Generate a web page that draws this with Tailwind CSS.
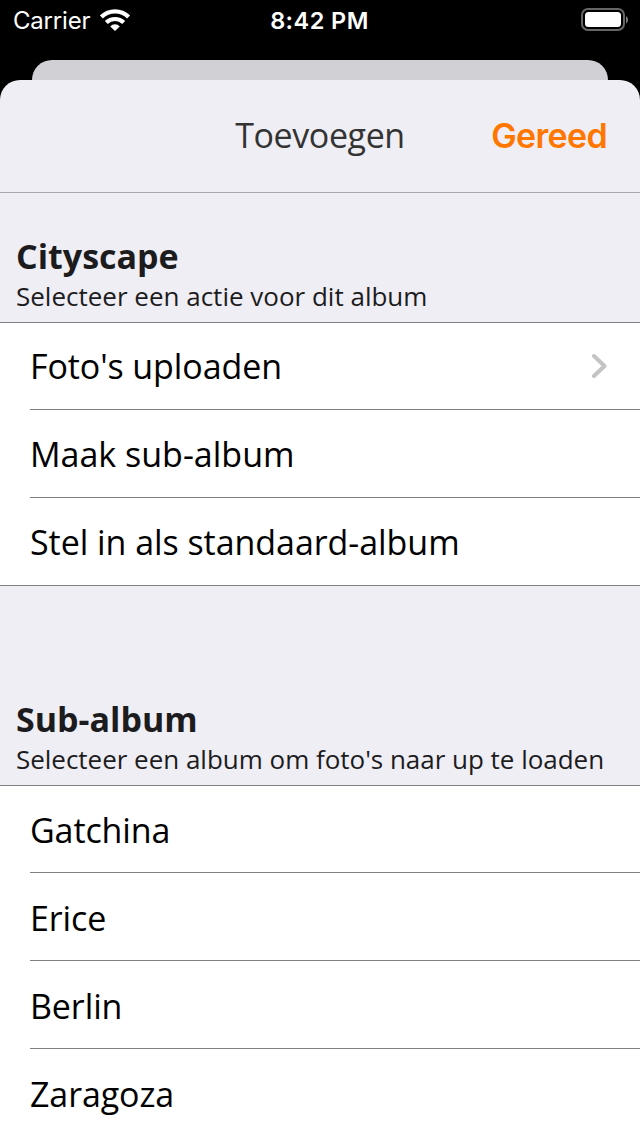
<!DOCTYPE html>
<html lang="nl"><head><meta charset="utf-8"><title>Toevoegen</title>
<script src="https://cdn.jsdelivr.net/npm/@tailwindcss/browser@4"></script></head>
<body class="w-[640px] h-[1136px] overflow-hidden bg-black font-['Open_Sans',sans-serif] text-black">
<header class="h-[60px] grid grid-cols-[1fr_auto_1fr] items-start text-white font-['Inter',sans-serif] pl-[13px] pr-[11px]">
<div class="flex pt-[6px]"><span class="w-[87px] text-[24px] leading-[30px] tracking-[-0.2px]">Carrier</span>
<svg class="mt-[3px]" width="30" height="22" viewBox="0 0 30 22" fill="none" stroke="#fff" stroke-width="4.2"><path d="M1.4 7.9a19.5 19.5 0 0 1 27.2 0"/><path d="M6.3 13.6a12.3 12.3 0 0 1 17.4 0"/><path d="M15 22l-4.8-4.6a6.5 6.5 0 0 1 9.6 0z" fill="#fff" stroke="none"/></svg></div>
<div class="pt-[6px] -ml-[3px] text-[23.5px] leading-[30px] font-semibold tracking-[0.45px]">8:42 PM</div>
<svg class="mt-[8px] justify-self-end" width="50" height="24" viewBox="0 0 50 24"><rect x="3" y="1" width="42" height="21" rx="6" fill="none" stroke="#666" stroke-width="2"/><rect x="6" y="4" width="36" height="15" rx="3.5" fill="#fff"/><path d="M47 8q2 1 2 3.7t-2 3.7z" fill="#808080"/></svg>
</header>
<div class="h-5 mx-8 rounded-t-[20px] bg-[#d1d0d4]"></div>
<main class="h-[1056px] rounded-t-[20px] bg-[#efeef4] overflow-hidden">
<div class="h-[113px] border-b border-[#a9a9ae] grid grid-cols-[1fr_auto_1fr] items-center px-8"><span></span><h1 class="text-[34px] tracking-[-0.4px] text-[#333] pb-0.5">Toevoegen</h1><button class="text-right text-[#ff7700] text-[34px] tracking-[-0.65px] font-semibold font-['Inter',sans-serif] pb-0.5 pr-px">Gereed</button></div>
<section>
<div class="h-[129px] px-4 pt-[39px] text-[#1c1c1e]"><h2 class="text-[34px] leading-[48px] font-bold">Cityscape</h2><p class="text-[26px] leading-[32px]">Selecteer een actie voor dit album</p></div>
<ul class="bg-white border-y border-[#818184] text-[34px] leading-[86px]">
<li class="ml-[30px] h-[87px] border-b border-[#818184] flex items-center justify-between pr-[33px]"><span class="tracking-[-0.1px]">Foto's uploaden</span><svg width="16" height="26" viewBox="0 0 16 26" fill="none" stroke="#c4c4c6" stroke-width="4" stroke-linecap="round" stroke-linejoin="round"><path d="M3 3l10.5 10L3 23"/></svg></li>
<li class="ml-[30px] h-[88px] border-b border-[#818184] pt-px">Maak sub-album</li>
<li class="ml-[30px] h-[87px] pt-px tracking-[-0.05px]">Stel in als standaard-album</li>
</ul></section>
<section>
<div class="h-[199px] px-4 pt-[109px] text-[#1c1c1e]"><h2 class="text-[34px] leading-[48px] font-bold">Sub-album</h2><p class="text-[26px] leading-[32px] tracking-[-0.02px] whitespace-nowrap">Selecteer een album om foto's naar up te loaden</p></div>
<ul class="bg-white border-t border-[#818184] text-[34px] leading-[86px] tracking-[-0.1px]">
<li class="ml-[30px] h-[87px] border-b border-[#818184] pt-px">Gatchina</li>
<li class="ml-[30px] h-[88px] border-b border-[#818184] pt-0.5">Erice</li>
<li class="ml-[30px] h-[88px] border-b border-[#818184] pt-0.5">Berlin</li>
<li class="ml-[30px] h-[88px] pt-0.5">Zaragoza</li>
</ul></section>
</main></body></html>
